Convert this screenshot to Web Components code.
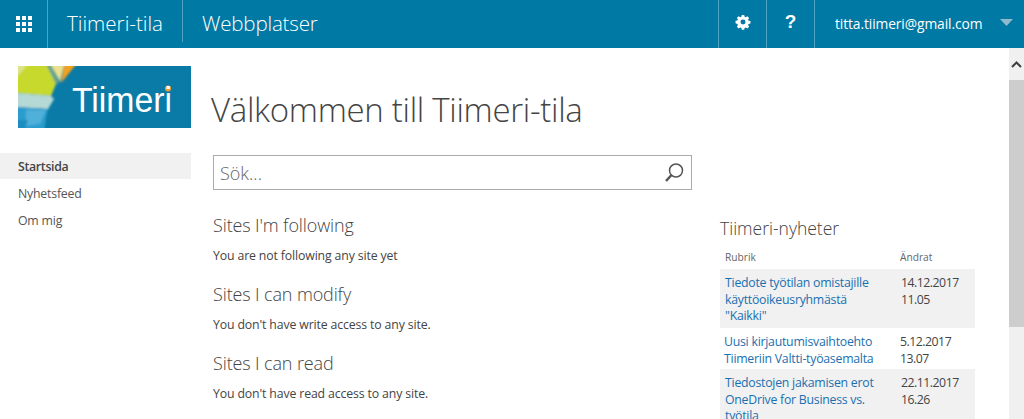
<!DOCTYPE html>
<html><head><meta charset="utf-8"><style>
html,body{margin:0;padding:0;height:419px;overflow:hidden;background:#fff}
body{font-family:"Open Sans","Noto Sans",sans-serif;color:#444}
</style></head><body>
<app-shell>
<top-bar></top-bar>
<div style="display:flex;height:371px;overflow:hidden">
<side-nav></side-nav>
<main-col></main-col>
<news-list></news-list>
<scroll-bar></scroll-bar>
</div>
</app-shell>
<script>
function def(name,html){customElements.define(name,class extends HTMLElement{constructor(){super();this.attachShadow({mode:'open'}).innerHTML=html}})}
def('app-shell',`<style>:host{display:block;width:1024px;height:419px;overflow:hidden}</style><slot></slot>`);
def('top-bar',`<style>
:host{display:flex;height:48px;background:#0079a4;color:#fff;font-family:"Open Sans",sans-serif}
.c{display:flex;align-items:center;box-sizing:border-box;height:48px}
.b{border-right:1px solid #4fa2c1}
.t{font-size:20.600px;font-weight:300;letter-spacing:-.2px;padding-bottom:2px;box-sizing:border-box}
.short{height:42px;align-self:flex-start;letter-spacing:0}
svg{display:block}
.mail{font-size:13.800px;letter-spacing:-.1px;padding-left:20px;width:168px;padding-bottom:1px}
.spacer{flex:1}
</style>
<div class="c b" style="width:48px;justify-content:center">
<svg width="16" height="16" viewBox="0 0 16 16" fill="#fff"><rect x="0" y="0" width="4" height="4"/><rect x="6" y="0" width="4" height="4"/><rect x="12" y="0" width="4" height="4"/><rect x="0" y="6" width="4" height="4"/><rect x="6" y="6" width="4" height="4"/><rect x="12" y="6" width="4" height="4"/><rect x="0" y="12" width="4" height="4"/><rect x="6" y="12" width="4" height="4"/><rect x="12" y="12" width="4" height="4"/></svg></div>
<div class="c t short b" style="width:135px;padding-left:19px;padding-top:5px">Tiimeri-tila</div>
<div class="c t" style="padding-left:19px">Webbplatser</div>
<div class="spacer"></div>
<div class="c b" style="width:1px"></div>
<div class="c b" style="width:48px;justify-content:center;padding-bottom:4px">
<svg width="16" height="16" viewBox="-1 -1 18 18"><path fill="#fff" fill-rule="evenodd" d="M6.600 0h2.800l.4 2.100 1.300.6L12.900 1.500l2 2-1.200 1.800.6 1.300 2.100.4v2.800l-2.100.4-.6 1.300 1.200 1.800-2 2-1.800-1.200-1.300.6-.4 2.100H6.600l-.4-2.100-1.300-.6-1.800 1.200-2-2 1.200-1.800-.6-1.300L-.4 9.400V6.600l2.100-.4.6-1.300L1.100 3.500l2-2 1.800 1.200 1.300-.6zM8 5.200a2.800 2.800 0 1 0 0 5.600 2.800 2.800 0 0 0 0-5.600z"/></svg></div>
<div class="c b" style="width:48px;justify-content:center;padding-bottom:4px;font-family:'Liberation Sans',sans-serif;font-weight:700;font-size:19px">?</div>
<div class="c mail">titta.tiimeri@gmail.com</div>
<div class="c" style="width:41px;padding-left:17px;padding-bottom:4px;box-sizing:border-box"><svg width="13" height="7" viewBox="0 0 13 7"><path d="M0 0h13L6.500 7z" fill="#8fb9cd"/></svg></div>`);
def('side-nav',`<style>
:host{display:block;width:191px;flex:none;box-sizing:border-box;padding-top:18px;font-family:"Open Sans",sans-serif;font-size:12.300px;color:#555}
.logo{display:block;margin-left:18px;margin-bottom:25px}
.i{height:26px;line-height:26px;padding-left:18px;letter-spacing:-.2px}
.i.on{background:#f1f1f1;font-weight:600;color:#444;letter-spacing:-.3px;line-height:28px;margin-bottom:1px}
.g{height:27px;line-height:27px}
</style>
<svg class="logo" width="173" height="62" viewBox="0 0 173 62">
<defs><filter id="b" x="-5%" y="-5%" width="110%" height="110%"><feGaussianBlur stdDeviation="1"/></filter><clipPath id="k"><rect width="173" height="62"/></clipPath></defs>
<rect width="173" height="62" fill="#0a7ba6"/>
<g clip-path="url(#k)"><g filter="url(#b)">
<path d="M-4 -4H28L38 18 33 30 -4 27z" fill="#c8d92f"/>
<path d="M-4 -4H12L-4 14z" fill="#dde38a"/>
<path d="M31 -4H47L42 16z" fill="#ecdf8e"/>
<path d="M27 -4H31L41 17 38 18z" fill="#6aa68e"/>
<path d="M47 -4H60L43 17z" fill="#f5a01e"/>
<path d="M-4 27L33 30 36 33 30 43 -4 41z" fill="#b5d9d5"/>
<path d="M-4 41L30 43 28 52 26 66H-4z" fill="#2a9ccd"/>
<path d="M8 44L28 44 22 58 8 60z" fill="#4fb0d9"/>
<path d="M-4 54L10 54 6 66H-4z" fill="#1b8dc0"/>
</g></g>
<circle cx="150" cy="22.500" r="3" fill="#f0a030"/>
<text x="54" y="46" font-family="Liberation Sans,sans-serif" font-size="35" fill="#fff" textLength="100" lengthAdjust="spacingAndGlyphs">Tiimeri</text>
</svg>
<div class="i on">Startsida</div><div class="i g">Nyhetsfeed</div><div class="i g">Om mig</div>`);
def('main-col',`<style>
:host{display:block;width:507px;flex:none;box-sizing:border-box;padding-left:22px;padding-top:41px;font-family:"Open Sans",sans-serif}
h1{font-weight:300;font-size:33px;line-height:42px;margin:0 0 0 -2px;color:#444;letter-spacing:-.3px;white-space:nowrap}
.s{box-sizing:border-box;width:479px;height:35px;border:1px solid #ababab;margin-top:24px;display:flex;align-items:center;justify-content:space-between;padding:0 6px;font-size:18px;font-weight:300;color:#666}
svg{display:block}
</style>
<h1>Välkommen till Tiimeri-tila</h1>
<div class="s"><span>Sök...</span><svg width="21" height="21" viewBox="0 0 21 21" fill="none" stroke="#555"><circle cx="12" cy="8.500" r="6.500" stroke-width="1.500"/><path d="M7.500 13L2 19" stroke-width="2.500"/></svg></div>
<site-sec title="Sites I'm following" style="margin-top:23px">You are not following any site yet</site-sec>
<site-sec title="Sites I can modify">You don't have write access to any site.</site-sec>
<site-sec title="Sites I can read">You don't have read access to any site.</site-sec>`);
customElements.define('site-sec',class extends HTMLElement{constructor(){super();this.attachShadow({mode:'open'}).innerHTML=`<style>
:host{display:block;height:69px;font-family:"Open Sans",sans-serif}
h2{font-weight:300;font-size:18px;line-height:24px;margin:0;color:#444;letter-spacing:-.13px}
p{margin:10px 0 0;font-size:12.300px;line-height:18px;color:#444;letter-spacing:-.14px}
</style><h2></h2><p><slot></slot></p>`}connectedCallback(){this.shadowRoot.querySelector('h2').textContent=this.getAttribute('title')}});
def('news-list',`<style>
:host{display:block;width:255px;flex:none;margin-left:22px;box-sizing:border-box;padding-top:168px;font-family:"Open Sans",sans-serif}
h3{font-weight:300;font-size:17.500px;line-height:24px;margin:0;color:#444}
.h{display:grid;grid-template-columns:180px 75px;font-size:10.200px;color:#666;height:24px;line-height:24px;margin-top:5px}
.h span{padding-left:5px}.h span+span{padding-left:0}
</style>
<h3>Tiimeri-nyheter</h3>
<div class="h"><span>Rubrik</span><span>Ändrat</span></div>
<news-row alt h="59" a="14.12.2017" b="11.05">Tiedote työtilan omistajille<br>käyttöoikeusryhmästä<br>"Kaikki"</news-row>
<news-row h="41" a="5.12.2017" b="13.07" shift>Uusi kirjautumisvaihtoehto<br>Tiimeriin Valtti-työasemalta</news-row>
<news-row alt h="59" a="22.11.2017" b="16.26">Tiedostojen jakamisen erot<br>OneDrive for Business vs.<br>työtila</news-row>`);
customElements.define('news-row',class extends HTMLElement{constructor(){super();this.attachShadow({mode:'open'}).innerHTML=`<style>
:host{display:grid;grid-template-columns:180px 75px;font-family:"Open Sans",sans-serif;font-size:12.300px;line-height:16.500px;letter-spacing:-.25px;box-sizing:border-box;padding-top:6px}
:host([alt]){background:#f1f1f1}
.l{color:#1a6fb0;padding-left:5px}
.d{color:#444;letter-spacing:-.5px;padding-left:1px}
:host([shift]){padding-top:5px}
:host([shift]) .l{padding-left:4px;line-height:17px}
:host([shift]) .d{padding-left:0;line-height:17px}
</style><div class="l"><slot></slot></div><div class="d"></div>`}connectedCallback(){this.style.height=this.getAttribute('h')+'px';this.shadowRoot.querySelector('.d').innerHTML=this.getAttribute('a')+'<br>'+this.getAttribute('b')}});
def('scroll-bar',`<style>
:host{display:block;position:absolute;left:1009px;top:48px;width:15px;height:371px;background:#f0f0f0}
.u{height:32px;display:flex;align-items:center;justify-content:center}
.t{height:247px;background:#cdcdcd}
</style><div class="u"><svg width="11" height="7" viewBox="0 0 11 7" fill="none" stroke="#404040" stroke-width="2"><path d="M1 6L5.500 1.500 10 6"/></svg></div><div class="t"></div>`);
</script>
</body></html>
